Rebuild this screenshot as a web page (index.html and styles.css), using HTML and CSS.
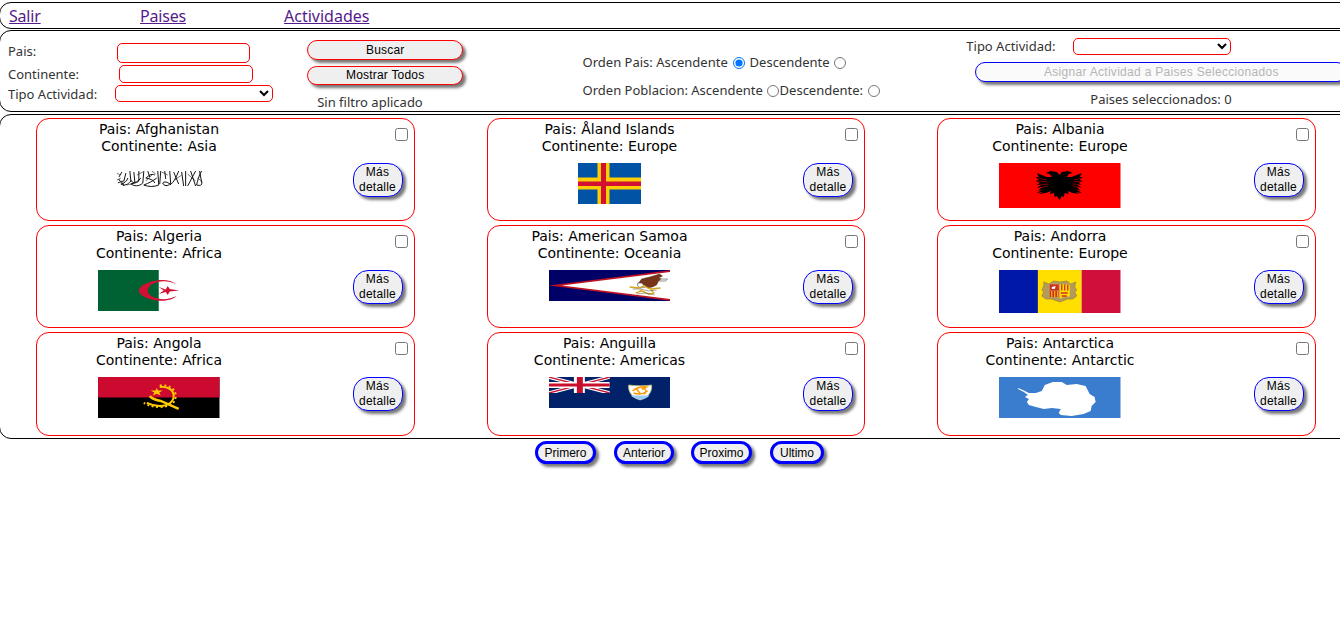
FILE: index.html
```html
<!DOCTYPE html>
<html lang="es">
<head>
<meta charset="utf-8">
<title>Paises</title>
<link rel="stylesheet" href="styles.css">
</head>
<body>
<nav class="panel nav">
  <a class="salir" href="#">Salir</a><a class="paises" href="#">Paises</a><a class="actividades" href="#">Actividades</a>
</nav>
<section class="panel filters">
  <div class="fields">
    <div class="field f-pais"><label>Pais:</label><input type="text"></div>
    <div class="field f-cont"><label>Continente:</label><input type="text"></div>
    <div class="field f-tipo"><label>Tipo Actividad:</label><select><option></option></select></div>
  </div>
  <div class="search">
    <button class="btn red">Buscar</button>
    <button class="btn red">Mostrar Todos</button>
    <span class="status">Sin filtro aplicado</span>
  </div>
  <div class="orders">
    <div class="order"><span class="o1">Orden Pais: Ascendente</span><input type="radio" name="orden" checked><span class="o2">Descendente</span><input type="radio" name="orden"></div>
    <div class="order second"><span class="o3">Orden Poblacion: Ascendente</span><input type="radio" name="orden"><span class="o4">Descendente:</span><input type="radio" name="orden"></div>
  </div>
  <div class="assign">
    <div class="assign-row"><label>Tipo Actividad:</label><select><option></option></select></div>
    <button class="btn assign-btn" disabled>Asignar Actividad a Paises Seleccionados</button>
    <span class="selected">Paises seleccionados: 0</span>
  </div>
</section>
<main class="panel cards">
  <article class="card">
    <div class="info"><span>Pais: Afghanistan</span><span>Continente: Asia</span>
      <svg class="flag h45" viewBox="0 0 122 45"><g fill="none" stroke="#111" stroke-width="1"><path d="M104 8c-3 5-4 10-5 14 4 1 6 0 5-3l-2-11M98 8l-8 15M93 8l5 15M88 8v15M84 9l2 14M81 8c-2 5-5 12-9 14M76 9l5 12M72 8l1 12c-3 4-7 3-8 0 3-3 6 1 8 1M67 8l1 8M63 8l-1 13M60 8l1 14c-5 2-10 2-15 0 5-2 9-4 13-7M57 12c-4-2-6 1-9 3 5 1 8 2 9 5M50 8l2 6M46 8l-1 12c-4 4-9 3-12 1 4-1 8-3 10-6M41 8v10c-3 3-7 2-8-1M36 9l1 10M32 8l1 10c-3 4-7 5-10 3 4-1 6-3 7-6M28 10l-2 8c-3 1-5 0-5-2M24 9l-3 5M20 20c3-2 5-1 6 3"/><path stroke-width=".6" d="M19 10l3 2M54 8l4 3M64 9l6 3M77 17l7-5M90 11l8 7M19 17l4-2M39 12l6-3M48 18l7-7M100 15l5 4M29 22l8-2"/></g></svg>
    </div>
    <div class="actions"><input type="checkbox"><button class="btn more">Más<br>detalle</button></div>
  </article>
  <article class="card">
    <div class="info"><span>Pais: Åland Islands</span><span>Continente: Europe</span>
      <svg class="flag aland" viewBox="0 0 63 41"><path fill="#0053a5" d="M0 0h63v41H0z"/><path fill="#ffce00" d="M19.5 0h12v41h-12zM0 14.5h63v12H0z"/><path fill="#d21034" d="M23 0h5v41h-5zM0 18.5h63v4.500H0z"/></svg>
    </div>
    <div class="actions"><input type="checkbox"><button class="btn more">Más<br>detalle</button></div>
  </article>
  <article class="card">
    <div class="info"><span>Pais: Albania</span><span>Continente: Europe</span>
      <svg class="flag h45" viewBox="0 0 122 45"><path fill="#f00" d="M0 0h122v45H0z"/><path d="M61 12l-3-3-6-1-5 2 4 1 2 3-5 0-10-4 2 4-3 0 3 3-3 1 4 2-3 2 4 0-4 3 5-1-4 4 5-2-6 4 6-1-4 2 7-1 5-2-1 3 4-1 1 4 2-1 3 4 2-4 2 1 1-4 4 1-1-3 5 2 7 1-4-2 6 1-6-4 5 2-4-4 5 1-4-3 4 0-3-2 4-2-3-1 3-3-3 0 2-4-10 4-5 0 2-3 4-1-5-2-6 1z"/><path fill="none" stroke="#f00" stroke-width=".5" d="M39 15l9 2M39 18l10 1M40 22l9-1M41 25l8-2M84 15l-9 2M84 18l-10 1M83 22l-9-1M82 25l-8-2"/></svg>
    </div>
    <div class="actions"><input type="checkbox"><button class="btn more">Más<br>detalle</button></div>
  </article>
  <article class="card">
    <div class="info"><span>Pais: Algeria</span><span>Continente: Africa</span>
      <svg class="flag h41" viewBox="0 0 122 41"><path fill="#fff" d="M0 0h122v41H0z"/><path fill="#006233" d="M0 0h61v41H0z"/><path fill="#d21034" d="M79 14.500C73 9 62 9 54 11.500S41 17 41 20.500s5 7 13 9 19 2 25-3.500c-6 3-13 4-19 2.500S50 24.500 50 20.500s4-7 10-8.500 13-.5 19 2.500zM81.500 20.500L72 19l-2-3-2 3.500-7-2.500 5 3.500-5 3.500 7-2 2 3 2-3.500z"/></svg>
    </div>
    <div class="actions"><input type="checkbox"><button class="btn more">Más<br>detalle</button></div>
  </article>
  <article class="card">
    <div class="info"><span>Pais: American Samoa</span><span>Continente: Oceania</span>
      <svg class="flag h31" viewBox="0 0 122 31"><path fill="#006" d="M0 0h122v31H0z"/><path fill="#bd1021" d="M122 0L0 15.500 122 31z"/><path fill="#fff" d="M122 2L13 15.500 122 29z"/><path fill="#7b3318" stroke="#321" stroke-width=".4" d="M90 13l3-4 8-2 10-3 3 2-4 2 3 1-3 2-2 4-4 2-5 1-3-3-5 0z"/><path fill="#fff" stroke="#444" stroke-width=".6" d="M89 13l4 0 4 4-5 1-3-2zM112 9l7 0-2 2-6 0z"/><path fill="none" stroke="#d5a51b" stroke-width="1.300" d="M81 17l9 1 5-2 7 3 10-1M87 23l6-2 7 3 6-1M91 20l5 2M102 19l3 4"/><path fill="none" stroke="#543" stroke-width=".5" d="M84 19l8 0 8 2 8-1M88 24l8-1 10 2M94 11l10-3M97 14l8-5"/></svg>
    </div>
    <div class="actions"><input type="checkbox"><button class="btn more">Más<br>detalle</button></div>
  </article>
  <article class="card">
    <div class="info"><span>Pais: Andorra</span><span>Continente: Europe</span>
      <svg class="flag h43" viewBox="0 0 122 43"><path fill="#0018a8" d="M0 0h40v43H0z"/><path fill="#fedf00" d="M39 0h44v43H39z"/><path fill="#d0103a" d="M83 0h39v43H83z"/><path fill="#b59b5a" stroke="#8c7345" stroke-width=".6" d="M45 12l5 2 5-3 6 1 7-1 4 3 5-2-1 5 2 3-2 2 2 4-4 3-5 0-8 3-8-3-6 0-4-3 2-4-2-2 2-4z"/><path fill="#d52b1e" d="M51 14.500h9v6h-9zM51 21h9v6h-9z"/><path fill="#fedf00" d="M61 14.500h10v12h-4l-6 2z"/><path fill="none" stroke="#fedf00" d="M53 21v6M56 21v6M59 21v6"/><path fill="none" stroke="#d52b1e" stroke-width="1.300" d="M63 14.500v6M66 14.500v6M69 14.500v6M62 23h7M63 26h5"/><path fill="#fff" d="M53 17l4-1-1 3-3 0z"/></svg>
    </div>
    <div class="actions"><input type="checkbox"><button class="btn more">Más<br>detalle</button></div>
  </article>
  <article class="card">
    <div class="info"><span>Pais: Angola</span><span>Continente: Africa</span>
      <svg class="flag h41" viewBox="0 0 122 41"><path d="M0 0h122v41H0z"/><path fill="#cc092f" d="M0 0h122v20.500H0z"/><g fill="none" stroke="#ffcb00"><path stroke-width="2" d="M62 10c8-1 14 3 14 9 0 6-6 10-14 10-5 0-9-1-13-3"/><path stroke-width="2" stroke-dasharray="2 2.500" d="M62 8.500c10-1 16 4 16 10.500 0 7-6 11-16 11-6 0-11-1-16-4"/><path stroke-width="2.400" d="M52 19c2 3 6 4 11 5l18 8"/></g><path fill="#ffcb00" d="M59 11l1.200 2.500 4.800 0-3.500 2 1.500 3-4-1.800-4 1.800 1.500-3-3.500-2 4.800 0z"/></svg>
    </div>
    <div class="actions"><input type="checkbox"><button class="btn more">Más<br>detalle</button></div>
  </article>
  <article class="card">
    <div class="info"><span>Pais: Anguilla</span><span>Continente: Americas</span>
      <svg class="flag h31" viewBox="0 0 122 31"><path fill="#012169" d="M0 0h122v31H0z"/><svg width="61" height="16"><path stroke="#fff" stroke-width="3.600" d="M0 0l61 16M61 0L0 16"/><path stroke="#c8102e" stroke-width="1.300" d="M0 0l61 16M61 0L0 16"/><path fill="#fff" d="M25 0h11v16H25zM0 5h61v6H0z"/><path fill="#c8102e" d="M28 0h6v16h-6zM0 6.500h61v3H0z"/></svg><path fill="#fff" stroke="#b5b36a" stroke-width=".8" d="M80 8c8 1 16 1 23 0 1 7-4 13-11.500 15C84 21 79 15 80 8z"/><path fill="#9bcbf5" d="M82 18.500h19c-2 2-5 4-9.500 4.300-4-.5-7-2-9.500-4.300z"/><path fill="none" stroke="#ff9800" stroke-width="1.500" d="M84 14c3-3 9-5 14-4l-5 2c5-1 6 3 2 5M85 16c5 2 10 1 14-2M87 11l5 6"/></svg>
    </div>
    <div class="actions"><input type="checkbox"><button class="btn more">Más<br>detalle</button></div>
  </article>
  <article class="card">
    <div class="info"><span>Pais: Antarctica</span><span>Continente: Antarctic</span>
      <svg class="flag h41" viewBox="0 0 122 41"><path fill="#3a7dce" d="M0 0h122v41H0z"/><path fill="#fff" d="M19 11l5 2 6 3 7 0 6-2 3-6 8-3 9 0 5 3 10-1 9 2 4 8 5 3 1 5-4 4-1 5-7 3-12 2-11-1-2-2 2-4-9-1-8 1-8-2-7-2-2-3 2-3-4-2 3-2-4-3-6-3z"/></svg>
    </div>
    <div class="actions"><input type="checkbox"><button class="btn more">Más<br>detalle</button></div>
  </article>
</main>
<footer class="pager">
  <button class="btn p1">Primero</button><button class="btn p2">Anterior</button><button class="btn p3">Proximo</button><button class="btn p4">Ultimo</button>
</footer>
</body>
</html>
```

FILE: styles.css
```css
* { box-sizing: border-box; }
html, body { height: 100%; }
body { margin: 0; padding-top: 2px; overflow: hidden; background: #fff; font-family: "Noto Sans", sans-serif; }
.panel { width: 1356px; margin-left: -1px; border: 1px solid #000; border-radius: 12px; }
.nav { height: 27px; display: flex; padding-left: 9px; font-size: 16px; line-height: 26px; }
.nav a { color: #551a8b; }
.salir { width: 131px; letter-spacing: -.2px; }
.paises { width: 144px; letter-spacing: -.2px; }
.nav a { display: block; text-decoration: none; }
.nav a { text-decoration: underline; }
.filters { height: 82px; margin-top: 1px; display: flex; font-size: 13px; line-height: 18px; color: #333; }
.fields { width: 309px; padding: 12px 0 0 8px; }
.field { display: flex; align-items: center; }
.field input, select { border: 1px solid #f00; border-radius: 5px; background: #fff; padding: 0; margin: 0; }
.f-pais { height: 19px; }
.f-pais label { width: 109px; padding-bottom: 3px; }
.f-pais input { width: 133px; height: 20px; }
.f-cont { height: 21px; margin-top: 1px; }
.f-cont label { width: 111px; }
.f-cont input { width: 134px; height: 18px; }
.f-tipo { height: 17px; margin-top: 1px; }
.f-tipo label { width: 107px; }
select { width: 158px; height: 17px; }
.btn { font-family: "Liberation Sans", Arial, sans-serif; color: #000; background: #efefef; border: 1px solid #00f; padding: 0; margin: 0; letter-spacing: .2px; box-shadow: 3px 3px 3px #777; }
.search { width: 277px; padding-top: 9px; display: flex; flex-direction: column; align-items: flex-start; }
.red { width: 156px; height: 20px; border-color: #f00; border-radius: 10px; font-size: 12px; margin-bottom: 6px; }
.status { margin: 2px 0 0 10px; }
.orders { width: 386px; padding-top: 22px; }
.order { display: flex; align-items: center; height: 18px; }
.order.second { margin-top: 10px; }
.order input { width: 12px; height: 12px; margin: 1px 0 0; }
.o1 { width: 150px; }
.o2 { width: 83px; padding-left: 5px; box-sizing: content-box; width: 84px; }
.o3 { width: 184px; }
.o4 { width: 89px; padding-left: 1px; }
.assign { width: 390px; padding-top: 6px; }
.assign-row { display: flex; align-items: center; height: 18px; }
.assign-row label { width: 107px; }
.assign-btn { display: block; width: 372px; height: 20px; margin: 7px 0 0 9px; border-radius: 10px; color: #b5b5b5; background: #fafafa; font-size: 12px; letter-spacing: .3px; }
.selected { display: block; margin: 8px 0 0 124px; }
.cards { height: 325px; margin-top: 2px; padding: 3px 0 0 36px; display: grid; grid-template-columns: repeat(3, 378.5px); grid-auto-rows: 103.300px; column-gap: 72px; row-gap: 3.900px; }
.card { border: 1px solid #f00; border-radius: 13px; display: flex; justify-content: space-between; }
.info { width: 244px; display: flex; flex-direction: column; align-items: center; padding-top: 2px; font-family: "DejaVu Sans", Verdana, sans-serif; font-size: 14px; line-height: 17px; color: #000; }
.info span { white-space: nowrap; }
.flag { display: block; width: 121.500px; margin-top: 8px; }
.h45 { height: 45px; }
.h43 { height: 43px; }
.h41 { height: 41px; }
.h31 { height: 31px; }
.aland { width: 63px; height: 41px; }
.actions { width: 57px; padding: 9px 6px 0 0; display: flex; flex-direction: column; align-items: flex-end; }
.actions input { width: 13px; height: 13px; margin: 0; }
.more { width: 50px; height: 34px; margin: 22px 5px 0 0; border-radius: 15px; font-size: 12px; line-height: 15px; }
.pager { display: flex; padding: 2px 0 0 535px; }
.pager .btn { height: 23px; border-width: 3px; border-radius: 12px; font-size: 12px; letter-spacing: 0; }
.p1 { width: 61px; }
.pager .p2 { width: 60px; margin-left: 18px; }
.pager .p3 { width: 61px; margin-left: 17px; }
.pager .p4 { width: 54px; margin-left: 18px; }
```
